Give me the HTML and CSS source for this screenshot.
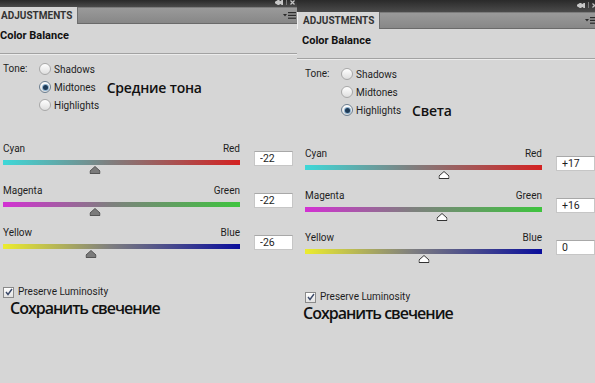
FILE: index.html
```html
<!DOCTYPE html>
<html lang="en">
  <head>
    <meta charset="UTF-8" />
    <title>Color Balance</title>
    <link rel="stylesheet" href="styles.css">
  </head>
  <body>
    <div class="panels">
      <section class="panel panel--left">
        <div class="panel__top">
          <svg class="panel__icon" width="8" height="5" viewBox="0 0 8 5"><path d="M4 0 L0 2.5 L4 5 Z M8 0 L4 2.5 L8 5 Z" /></svg>
          <span class="panel__sep"></span>
          <svg class="panel__icon" width="5" height="5" viewBox="0 0 5 5"><path d="M0.5 0.5 L4.5 4.5 M4.5 0.5 L0.5 4.5" /></svg>
        </div>
        <div class="panel__tabs">
          <div class="panel__tab">ADJUSTMENTS</div>
          <div class="panel__tabfill">
            <svg class="panel__menu" width="13" height="7" viewBox="0 0 13 7"><path d="M0 2 L4 2 L2 4.5 Z" /><rect x="5" y="0" width="8" height="1.2" /><rect x="5" y="2.8" width="8" height="1.2" /><rect x="5" y="5.6" width="8" height="1.2" /></svg>
          </div>
        </div>

        <h2 class="panel__title">Color Balance</h2>

        <div class="tone">
          <div class="tone__label">Tone:</div>
          <div class="tone__options">
            <label class="tone__option"><span class="radio"></span>Shadows</label>
            <label class="tone__option"><span class="radio radio--on"></span>Midtones<span class="note note--inline">Средние тона</span></label>
            <label class="tone__option"><span class="radio"></span>Highlights</label>
          </div>
        </div>

        <div class="sliders">
          <div class="slider">
            <div class="slider__scale">
              <div class="slider__labels"><span>Cyan</span><span>Red</span></div>
              <div class="slider__track slider__track--cr">
                <svg class="slider__thumb" style="left: 39%" width="11" height="8" viewBox="0 0 11 8"><path d="M5.5 0.5 L10.5 5 L10.5 7.5 L0.5 7.5 L0.5 5 Z" /></svg>
              </div>
            </div>
            <input class="slider__value" type="text" value="-22" />
          </div>
          <div class="slider">
            <div class="slider__scale">
              <div class="slider__labels"><span>Magenta</span><span>Green</span></div>
              <div class="slider__track slider__track--mg">
                <svg class="slider__thumb" style="left: 39%" width="11" height="8" viewBox="0 0 11 8"><path d="M5.5 0.5 L10.5 5 L10.5 7.5 L0.5 7.5 L0.5 5 Z" /></svg>
              </div>
            </div>
            <input class="slider__value" type="text" value="-22" />
          </div>
          <div class="slider">
            <div class="slider__scale">
              <div class="slider__labels"><span>Yellow</span><span>Blue</span></div>
              <div class="slider__track slider__track--yb">
                <svg class="slider__thumb" style="left: 37%" width="11" height="8" viewBox="0 0 11 8"><path d="M5.5 0.5 L10.5 5 L10.5 7.5 L0.5 7.5 L0.5 5 Z" /></svg>
              </div>
            </div>
            <input class="slider__value" type="text" value="-26" />
          </div>
        </div>

        <label class="preserve">
          <span class="checkbox"><svg width="8" height="8" viewBox="0 0 8 8"><path d="M1 4 L3 6.5 L7 1" /></svg></span>
          Preserve Luminosity
        </label>
        <div class="note note--big">Сохранить свечение</div>
      </section>

      <section class="panel panel--right">
        <div class="panel__top">
          <svg class="panel__icon" width="8" height="5" viewBox="0 0 8 5"><path d="M4 0 L0 2.5 L4 5 Z M8 0 L4 2.5 L8 5 Z" /></svg>
          <span class="panel__sep"></span>
          <svg class="panel__icon" width="5" height="5" viewBox="0 0 5 5"><path d="M0.5 0.5 L4.5 4.5 M4.5 0.5 L0.5 4.5" /></svg>
        </div>
        <div class="panel__tabs">
          <div class="panel__tab">ADJUSTMENTS</div>
          <div class="panel__tabfill">
            <svg class="panel__menu" width="13" height="7" viewBox="0 0 13 7"><path d="M0 2 L4 2 L2 4.5 Z" /><rect x="5" y="0" width="8" height="1.2" /><rect x="5" y="2.8" width="8" height="1.2" /><rect x="5" y="5.6" width="8" height="1.2" /></svg>
          </div>
        </div>

        <h2 class="panel__title">Color Balance</h2>

        <div class="tone">
          <div class="tone__label">Tone:</div>
          <div class="tone__options">
            <label class="tone__option"><span class="radio"></span>Shadows</label>
            <label class="tone__option"><span class="radio"></span>Midtones</label>
            <label class="tone__option"><span class="radio radio--on"></span>Highlights<span class="note note--inline">Света</span></label>
          </div>
        </div>

        <div class="sliders">
          <div class="slider">
            <div class="slider__scale">
              <div class="slider__labels"><span>Cyan</span><span>Red</span></div>
              <div class="slider__track slider__track--cr">
                <svg class="slider__thumb" style="left: 58.5%" width="11" height="8" viewBox="0 0 11 8"><path d="M5.5 0.5 L10.5 5 L10.5 7.5 L0.5 7.5 L0.5 5 Z" /></svg>
              </div>
            </div>
            <input class="slider__value" type="text" value="+17" />
          </div>
          <div class="slider">
            <div class="slider__scale">
              <div class="slider__labels"><span>Magenta</span><span>Green</span></div>
              <div class="slider__track slider__track--mg">
                <svg class="slider__thumb" style="left: 58%" width="11" height="8" viewBox="0 0 11 8"><path d="M5.5 0.5 L10.5 5 L10.5 7.5 L0.5 7.5 L0.5 5 Z" /></svg>
              </div>
            </div>
            <input class="slider__value" type="text" value="+16" />
          </div>
          <div class="slider">
            <div class="slider__scale">
              <div class="slider__labels"><span>Yellow</span><span>Blue</span></div>
              <div class="slider__track slider__track--yb">
                <svg class="slider__thumb" style="left: 50%" width="11" height="8" viewBox="0 0 11 8"><path d="M5.5 0.5 L10.5 5 L10.5 7.5 L0.5 7.5 L0.5 5 Z" /></svg>
              </div>
            </div>
            <input class="slider__value" type="text" value="0" />
          </div>
        </div>

        <label class="preserve">
          <span class="checkbox"><svg width="8" height="8" viewBox="0 0 8 8"><path d="M1 4 L3 6.5 L7 1" /></svg></span>
          Preserve Luminosity
        </label>
        <div class="note note--big">Сохранить свечение</div>
      </section>
    </div>
  </body>
</html>
```

FILE: styles.css
```css
html,
body {
  margin: 0;
  width: 595px;
  height: 383px;
  overflow: hidden;
  background-color: #d6d6d6;
  font-family: Roboto, 'Liberation Sans', Arial, sans-serif;
  font-size: 10px;
  color: #1e1e1e;
}

.panels {
  display: flex;
  height: 100%;
}

.panel {
  flex: none;
  width: 302px;
  background-color: #d6d6d6;
}

.panel--left {
  margin-left: -5px;
}

/* dark strip with collapse / close buttons */
.panel__top {
  height: 7px;
  display: flex;
  justify-content: flex-end;
  align-items: flex-end;
  gap: 3px;
  padding: 0 2px 2px 0;
  box-sizing: border-box;
  background: linear-gradient(#2a2a2a, #4b4b4b);
}

.panel--right .panel__top {
  height: 12px;
  padding-bottom: 4px;
}

.panel__icon {
  fill: #c8c8c8;
  stroke: #c8c8c8;
  stroke-width: 1.2;
}

.panel__sep {
  width: 1px;
  height: 6px;
  background-color: #7a7a7a;
}

.panel__tabs {
  display: flex;
  height: 17px;
  background-color: #8d8d8d;
}

.panel__tab {
  width: 83px;
  box-sizing: border-box;
  padding-left: 5px;
  line-height: 17px;
  font-size: 10px;
  font-weight: bold;
  color: #333;
  background-color: #d6d6d6;
  border-left: 1px solid #f0f0f0;
  border-right: 1px solid #6e6e6e;
}

.panel__tabfill {
  flex: 1;
  display: flex;
  align-items: center;
  padding-left: 205px;
  border-top: 1px solid #7c7c7c;
  border-bottom: 1px solid #6a6a6a;
  background: linear-gradient(#9a9a9a, #878787);
}

.panel__menu {
  fill: #2b2b2b;
}

.panel__title {
  margin: 0;
  padding: 5px 5px 10px;
  font-size: 11px;
  line-height: 14px;
  font-weight: bold;
  color: #111;
  border-bottom: 1px solid #a2a2a2;
  box-shadow: 0 1px 0 #ececec;
}

.tone {
  display: flex;
  padding: 6px 0 0 8px;
}

.tone__label {
  width: 36px;
  line-height: 18px;
}

.tone__options {
  display: flex;
  flex-direction: column;
}

.tone__option {
  display: flex;
  align-items: center;
  gap: 3px;
  height: 18px;
}

.radio {
  width: 10px;
  height: 10px;
  border-radius: 50%;
  border: 1px solid #a8a8a8;
  background: linear-gradient(#ffffff, #dedede);
  display: flex;
  align-items: center;
  justify-content: center;
}

.radio--on {
  border-color: #6d7f90;
}

.radio--on::after {
  content: '';
  width: 5px;
  height: 5px;
  border-radius: 50%;
  background-color: #1f3b57;
  box-shadow: 0 0 0 1px #8fb3d1;
}

.note {
  font-family: 'Open Sans', sans-serif;
  font-weight: 600;
  color: #111;
}

.note--inline {
  margin-left: 8px;
  font-size: 14px;
  letter-spacing: -0.2px;
}

.note--big {
  margin: 0 0 0 15px;
  font-size: 16px;
  line-height: 18px;
  letter-spacing: -1px;
}

.panel--right .note--big {
  margin-left: 6px;
}

.sliders {
  padding: 28px 0 0 8px;
}

.slider {
  display: flex;
  gap: 14px;
  height: 42px;
}

.slider__scale {
  width: 237px;
}

.slider__labels {
  display: flex;
  justify-content: space-between;
  line-height: 14px;
}

.slider__track {
  position: relative;
  height: 5px;
  margin-top: 4px;
}

.slider__track--cr {
  background: linear-gradient(to right, #3ed8d8, #7f7f7f 45%, #d42222);
}

.slider__track--mg {
  background: linear-gradient(to right, #d330d3, #7f7f7f 45%, #3ec43e);
}

.slider__track--yb {
  background: linear-gradient(to right, #ecec2e, #7f7f7f 45%, #0a0e9c);
}

.slider__thumb {
  position: absolute;
  top: 6px;
  transform: translateX(-50%);
  fill: #7b7b7b;
  stroke: #555;
}

.panel--right .slider__thumb {
  fill: #fff;
  stroke: #333;
}

.slider__value {
  margin-top: 9px;
  width: 39px;
  height: 15px;
  box-sizing: border-box;
  padding: 0 5px;
  border: 1px solid #c6c6c6;
  border-top-color: #a8a8a8;
  background-color: #fff;
  font: inherit;
  font-size: 10.5px;
  color: #1e1e1e;
}

.preserve {
  display: flex;
  align-items: center;
  gap: 4px;
  margin: 17px 0 0 8px;
  line-height: 14px;
}

.checkbox {
  width: 9px;
  height: 9px;
  border: 1px solid #8a8a8a;
  background: linear-gradient(#fff, #e2e2e2);
  display: flex;
  align-items: center;
  justify-content: center;
}

.checkbox svg {
  fill: none;
  stroke: #3c4a6a;
  stroke-width: 1.4;
}
```
